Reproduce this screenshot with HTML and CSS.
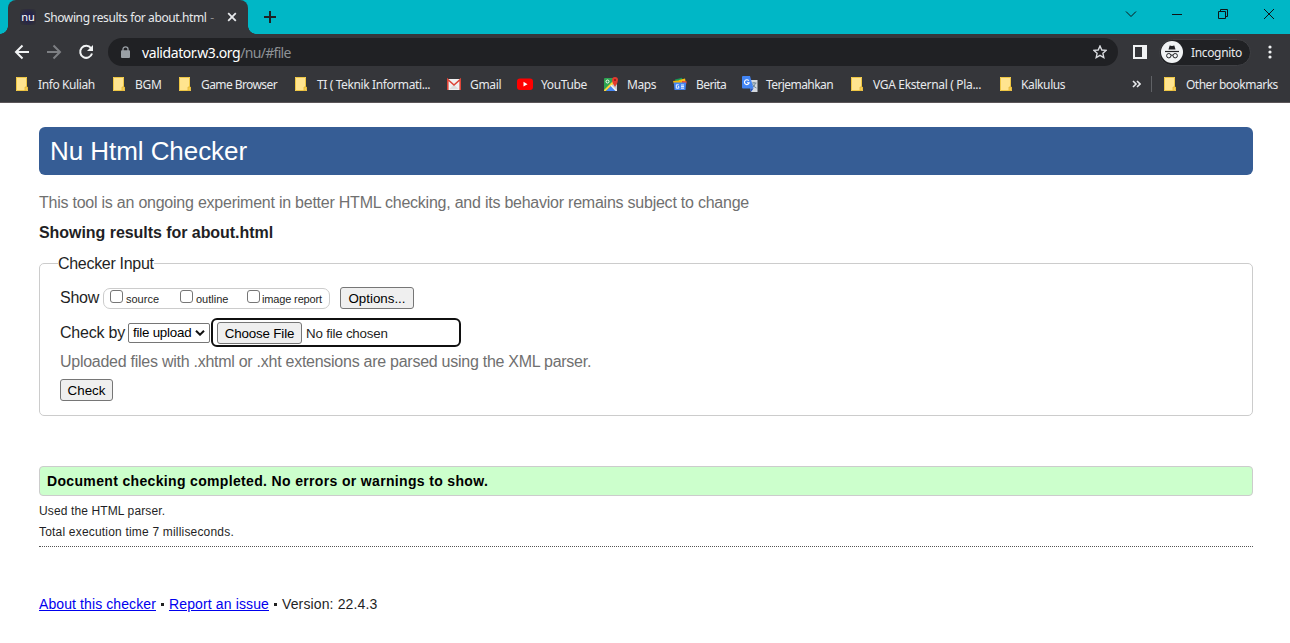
FILE: index.html
```html
<!DOCTYPE html>
<html lang="en">
<head>
<meta charset="utf-8">
<title>Showing results for about.html - Nu Html Checker</title>
<link rel="stylesheet" href="styles.css">
</head>
<body>
<svg class="defs" width="0" height="0">
  <symbol id="folder" viewBox="0 0 14 14"><path d="M1 0h11v10h1v4H1z" fill="#ffe48f"/><path d="M1.500.5h10v9.500M1.500.5v13h8.500" fill="none" stroke="#eec643"/><path d="M10 10h2.500v3.500H10z" fill="#f6cf52" stroke="#dfb02e" stroke-width=".7"/></symbol>
</svg>
<header class="browser">
  <div class="tabstrip">
    <div class="tab">
      <span class="favicon">nu</span>
      <span class="tab-title">Showing results for about.html <i>-</i></span>
      <svg class="tab-close" width="10" height="10" viewBox="0 0 10 10"><path d="M1.200 1.200l7.600 7.600M8.800 1.200L1.200 8.800" stroke="#e8eaed" stroke-width="1.800"/></svg>
    </div>
    <svg class="newtab" width="14" height="14" viewBox="0 0 14 14"><path d="M7 1v12M1 7h12" stroke="#202124" stroke-width="2"/></svg>
    <svg class="winctl" width="146" height="14" viewBox="0 0 146 14" fill="none" stroke="#101415"><path d="M1 4.500l5 5 5-5M47 7.500h10M93.500 4.500h7v7h-7zM95.500 4.500v-2h7v7h-2M139 2l10 10M149 2l-10 10"/></svg>
  </div>
  <div class="toolbar">
    <svg width="100" height="36" viewBox="0 0 100 36" fill="none" stroke-width="2">
      <path d="M29 18H16.500M22.500 11.500L16 18l6.500 6.500" stroke="#f1f3f4"/>
      <path d="M47 18h12.500M53.500 11.500L60 18l-6.500 6.500" stroke="#7d7f83"/>
      <path d="M91 14.200A6 6 0 1 0 92 19.500" stroke="#f1f3f4"/><path d="M93 11v6h-6z" fill="#f1f3f4"/>
    </svg>
    <div class="omnibox">
      <svg class="lock" width="9" height="12" viewBox="0 0 9 12"><path d="M2 5V3a2.500 2.200 0 0 1 5 0v2" fill="none" stroke="#9aa0a6" stroke-width="1.300"/><rect y="4.200" width="9" height="7.800" rx="1" fill="#9aa0a6"/></svg>
      <span class="url">validator.w3.org<i>/nu/#file</i></span>
      <svg class="star" width="14" height="14" viewBox="0 0 14 14"><path d="M7 1l1.800 4 4.300.4-3.200 2.900.9 4.200L7 10.300l-3.800 2.200.9-4.200L.9 5.400 5.200 5z" fill="none" stroke="#dadce0" stroke-width="1.400"/></svg>
    </div>
    <svg class="panel" width="14" height="14" viewBox="0 0 14 14"><path d="M0 0h14v14H0zM2 2v10h7V2z" fill="#f1f3f4" fill-rule="evenodd"/></svg>
    <div class="incognito">
      <svg width="22" height="22" viewBox="0 0 22 22"><circle cx="11" cy="11" r="11" fill="#f1f3f4"/><path d="M7.500 8.500l1.200-4 2.300.6 2.300-.6 1.200 4z" fill="#202124"/><path d="M4 10.500h14" stroke="#202124" stroke-width="1.200"/><g fill="none" stroke="#202124"><circle cx="7.800" cy="14.700" r="2.200"/><circle cx="14.200" cy="14.700" r="2.200"/><path d="M10 14.300q1-.7 2 0"/></g></svg>
      <span>Incognito</span>
    </div>
    <svg class="dots" width="4" height="14" viewBox="0 0 4 14" fill="#f1f3f4"><circle cx="2" cy="2" r="1.600"/><circle cx="2" cy="7" r="1.600"/><circle cx="2" cy="12" r="1.600"/></svg>
  </div>
  <nav class="bookmarks">
    <a><svg><use href="#folder"/></svg><span class="b1">Info Kuliah</span></a>
    <a><svg><use href="#folder"/></svg><span class="b2">BGM</span></a>
    <a><svg><use href="#folder"/></svg><span class="b3">Game Browser</span></a>
    <a><svg><use href="#folder"/></svg><span class="b4">TI ( Teknik Informati...</span></a>
    <a><svg viewBox="0 0 14 14"><path d="M0 2h14v11H0z" fill="#f1f1f1"/><path d="M2.500 12L7 7.500l4.500 4.500" fill="#ddd"/><path d="M.8 13V2.500L7 8l6.200-5.500V13" fill="none" stroke="#dc4437" stroke-width="1.600"/></svg><span class="b5">Gmail</span></a>
    <a class="youtube"><svg viewBox="0 0 16 14"><rect y="1.500" width="16" height="11.500" rx="3" fill="#f00"/><path d="M6.500 4.800L10.500 7.200l-4 2.400z" fill="#fff"/></svg><span class="b6">YouTube</span></a>
    <a><svg viewBox="0 0 14 14"><rect y="1" width="13" height="13" rx="1" fill="#2da451"/><path d="M6.500 8.500L11 5l2 3v6h-2z" fill="#c9ccd1"/><path d="M0 13L10 3l2 1.500L2 14H0z" fill="#fdd33c"/><path d="M2 14l5-5 5 5z" fill="#4285f4"/><path d="M6.300 8.700l1-1L13 13.300V14h-1.500z" fill="#f1f3f4"/><circle cx="3.500" cy="4.500" r="1.500" fill="none" stroke="#fff"/><path d="M11 10Q8 6 8 3a3 3 0 0 1 6 0q0 3-3 7z" fill="#e33b2e"/><circle cx="11" cy="3" r="1" fill="#8c1d16"/></svg><span class="b7">Maps</span></a>
    <a><svg viewBox="0 0 14 14"><path d="M2 2.500L9 .8l1 5H3z" fill="#159957"/><path d="M6 3l6-1.500 1 5H5z" fill="#f8bd15"/><path d="M0 4l8-.8 1 4H1z" fill="#f5b400"/><path d="M9 4l5 .5-1 3H9z" fill="#e84435"/><path d="M.8 5.500h12.400L12.500 13h-11z" fill="#4285f4"/><path d="M5.800 7.800H3.300v3.400h2.500V9.500H5M8 8h3M8 9.600h3M8 11.200h3" fill="none" stroke="#fff" stroke-width=".9"/></svg><span class="b8">Berita</span></a>
    <a class="translate"><svg viewBox="0 0 16 16"><path d="M6 4h9.500v12H9z" fill="#d5d9df"/><path d="M10 7h4.500M12 6v1M13.500 7q-1 4-4 5M10.500 8q1 3 4 4" fill="none" stroke="#6f8798"/><path d="M1 0h7l3.500 12.500H1Q0 12.500 0 11.500V1q0-1 1-1z" fill="#4285f4"/><path d="M8 12.500h3.500L9 16z" fill="#2451b8"/><path d="M6.800 4.800A2.400 2.400 0 1 0 7.200 6.700H5" fill="none" stroke="#fff" stroke-width="1.100"/></svg><span class="b9">Terjemahkan</span></a>
    <a><svg><use href="#folder"/></svg><span class="b10">VGA Eksternal ( Pla...</span></a>
    <a><svg><use href="#folder"/></svg><span class="b11">Kalkulus</span></a>
    <div class="overflow"><svg viewBox="0 0 9 8"><path d="M1 1l3 3-3 3M5 1l3 3-3 3" fill="none" stroke="#e8eaed" stroke-width="1.600"/></svg></div>
    <a><svg><use href="#folder"/></svg><span class="b12">Other bookmarks</span></a>
  </nav>
</header>
<main>
  <h1><span>Nu Html Checker</span></h1>
  <p class="intro"><span>This tool is an ongoing experiment in better HTML checking, and its behavior remains subject to change</span></p>
  <h2><span>Showing results for about.html</span></h2>
  <fieldset>
    <legend><span>Checker Input</span></legend>
    <div class="show-row">
      <span class="show">Show</span>
      <div class="checks"><label><i></i><span>source</span></label><label><i></i><span>outline</span></label><label><i></i><span class="image-report">image report</span></label></div>
      <button class="options"><span>Options...</span></button>
    </div>
    <div class="check-row">
      <span class="checkby">Check by</span>
      <div class="select"><span>file upload</span><svg width="10" height="6" viewBox="0 0 10 6"><path d="M1 .7l4 4 4-4" fill="none" stroke="#111" stroke-width="2"/></svg></div>
      <div class="file"><button><span>Choose File</span></button><span class="nofile">No file chosen</span></div>
    </div>
    <p class="hint"><span>Uploaded files with .xhtml or .xht extensions are parsed using the XML parser.</span></p>
    <button class="submit"><span>Check</span></button>
  </fieldset>
  <p class="success"><span>Document checking completed. No errors or warnings to show.</span></p>
  <p class="detail"><span class="d1">Used the HTML parser.</span></p>
  <p class="detail"><span class="d2">Total execution time 7 milliseconds.</span></p>
  <hr>
  <footer><a class="f1" href="#">About this checker</a><b></b><a class="f2" href="#">Report an issue</a><b></b><span class="f3">Version: 22.4.3</span></footer>
</main>
</body>
</html>
```
FILE: styles.css
```css
* { box-sizing: border-box; }
body { margin: 0; background: #fff; font-family: "Liberation Sans", Arial, sans-serif; color: #1f1f25; height: 643px; overflow: hidden; }
p, h1, h2 { margin: 0; }
svg { flex: none; }
span { white-space: nowrap; }
.defs { position: absolute; }

.browser { background: #35363a; height: 103px; border-bottom: 1px solid #5b5659; font-family: "Noto Sans", "Open Sans", sans-serif; font-size: 12px; color: #e8eaed; }
.tabstrip { height: 34px; background: #00b7c6; display: flex; align-items: flex-start; padding-left: 8px; }
.tab { position: relative; width: 240px; height: 34px; background: #35363a; border-radius: 8px 8px 0 0; display: flex; align-items: center; padding-left: 12px; }
.tab::before, .tab::after { content: ""; position: absolute; bottom: 0; width: 8px; height: 8px; }
.tab::before { left: -8px; background: radial-gradient(circle at 0 0, #00b7c6 7.500px, #35363a 8px); }
.tab::after { right: -8px; background: radial-gradient(circle at 100% 0, #00b7c6 7.500px, #35363a 8px); }
.favicon { width: 16px; height: 16px; line-height: 15px; font-size: 11px; text-align: center; color: #fff; background: radial-gradient(#232050 20%, #303038 80%); border-radius: 3px; }
.tab-title { width: 176px; margin-left: 8px; letter-spacing: -.39px; }
.tab-title i { font-style: normal; color: #8d8e91; margin-left: 1px; }
.tab-close { margin-left: 7px; }
.newtab { margin: 10px 0 0 15px; }
.winctl { margin: 7px 19px 0 auto; overflow: visible; }
.toolbar { height: 36px; display: flex; align-items: center; }
.omnibox { margin-left: 8px; width: 1010px; height: 28px; border-radius: 14px; background: #202124; display: flex; align-items: center; padding: 0 11px 0 13px; }
.url { margin-left: 12px; font-size: 14px; color: #fff; letter-spacing: -.42px; }
.url i { color: #8e9296; font-style: normal; letter-spacing: -.7px; }
.star { margin-left: auto; }
.panel { margin-left: 15px; }
.incognito { margin-left: 6px; height: 27px; width: 92px; border-radius: 14px; border: 1px solid #3f4044; background: #202124; display: flex; align-items: center; gap: 8px; letter-spacing: -.35px; }
.panel + .incognito { margin-left: 6px; padding-left: 1px; }
.toolbar .panel { margin-right: 6px; }
.dots { margin-left: 17px; }
.bookmarks { height: 28px; padding-left: 15px; display: grid; grid-template-columns: 97px 66px 116px 153px 70px 87px 69px 69px 108px 149px 131px 33px 1fr; align-items: center; }
.bookmarks a { display: flex; align-items: center; gap: 9px; }
.bookmarks a svg { width: 14px; height: 14px; }
.bookmarks .youtube svg { width: 16px; margin-right: -1px; }
.bookmarks .translate svg { width: 16px; height: 16px; margin-right: -1px; }
.b1, .b4, .b6, .b7, .b11 { letter-spacing: -.39px; }
.b2, .b5, .b10 { letter-spacing: -.33px; }
.b3, .b8, .b9 { letter-spacing: -.58px; }
.b12 { letter-spacing: -.5px; }
.b11 { margin-left: -1px; }
.overflow { height: 16px; border-right: 1px solid #606266; display: flex; align-items: center; margin-left: 2px; width: 20px; }
.overflow svg { width: 9px; height: 8px; }

main { padding: 24px 37px 0 39px; }
h1 { height: 48px; border-radius: 6px; background: #365d95; color: #fff; font-size: 26px; font-weight: 400; line-height: 48px; padding-left: 11px; letter-spacing: -.06px; }
.intro { height: 30px; margin-top: 13px; line-height: 30px; font-size: 16px; color: #707070; letter-spacing: -.236px; }
h2 { height: 30px; line-height: 30px; font-size: 16px; letter-spacing: -.05px; }
fieldset { margin: 5px 0 0; height: 163px; border: 1px solid #ccc; border-radius: 5px; padding: 14px 20px 0; min-width: 0; font-size: 16px; }
legend { height: 20px; line-height: 22px; padding: 0; margin-left: -2px; letter-spacing: -.3px; }
button { height: 22px; border: 1px solid #767676; border-radius: 3px; background: #efefef; color: #000; font: 13.330px "Liberation Sans", Arial, sans-serif; padding: 0; flex: none; text-align: center; }
.show-row { display: flex; align-items: center; height: 22px; }
.show { width: 43px; letter-spacing: -.25px; }
.checks { width: 227px; height: 21px; border: 1px solid #ccc; border-radius: 7px; display: grid; grid-template-columns: 70px 67px 1fr; padding-left: 6px; font-size: 11px; line-height: 20px; }
.checks label { display: flex; gap: 3px; }
.checks i { width: 13px; height: 13px; border: 1px solid #767676; border-radius: 3px; margin-top: 1px; flex: none; }
.checks .image-report { letter-spacing: -.15px; margin-left: -1px; }
.options { width: 74px; margin-left: 10px; }
.check-row { display: flex; align-items: center; height: 29px; margin-top: 9px; }
.checkby { width: 68px; letter-spacing: -.2px; }
.select { width: 82px; height: 20px; border: 1px solid #767676; border-radius: 2px; display: flex; align-items: center; justify-content: space-between; padding: 0 4px; font-size: 13.330px; line-height: 20px; color: #000; letter-spacing: -.22px; }
.file { width: 250px; height: 29px; margin-left: 1px; border: 2px solid #101010; border-radius: 6px; display: flex; align-items: center; padding-left: 4px; font-size: 13.330px; }
.file button { width: 85px; margin-right: 4px; padding-top: 1px; letter-spacing: -.15px; }
.nofile { letter-spacing: -.2px; padding-top: 2px; }
.hint { height: 30px; line-height: 30px; color: #707070; letter-spacing: -.264px; }
.submit { width: 53px; margin-top: 2px; display: block; }
.success { height: 30px; margin-top: 50px; border: 1px solid #ccc; border-radius: 4px; background: #cfc; color: #000; font-size: 14px; font-weight: 700; line-height: 28px; padding-left: 7px; letter-spacing: .34px; }
.detail { height: 21px; line-height: 21px; font-size: 12px; }
.success + .detail { margin-top: 5px; }
.d1 { letter-spacing: .12px; }
.d2 { letter-spacing: .19px; }
hr { margin: 3px 0 0; border: 0; border-top: 1px dotted #555; }
footer { margin-top: 47px; height: 20px; line-height: 20px; font-size: 14px; display: flex; align-items: center; }
footer a { color: #00e; white-space: nowrap; }
footer b { width: 3px; height: 3px; background: #222; margin: 0 5px; }
.f1 { letter-spacing: .1px; }
.f2 { letter-spacing: .13px; }
.f3 { letter-spacing: .13px; }
```
